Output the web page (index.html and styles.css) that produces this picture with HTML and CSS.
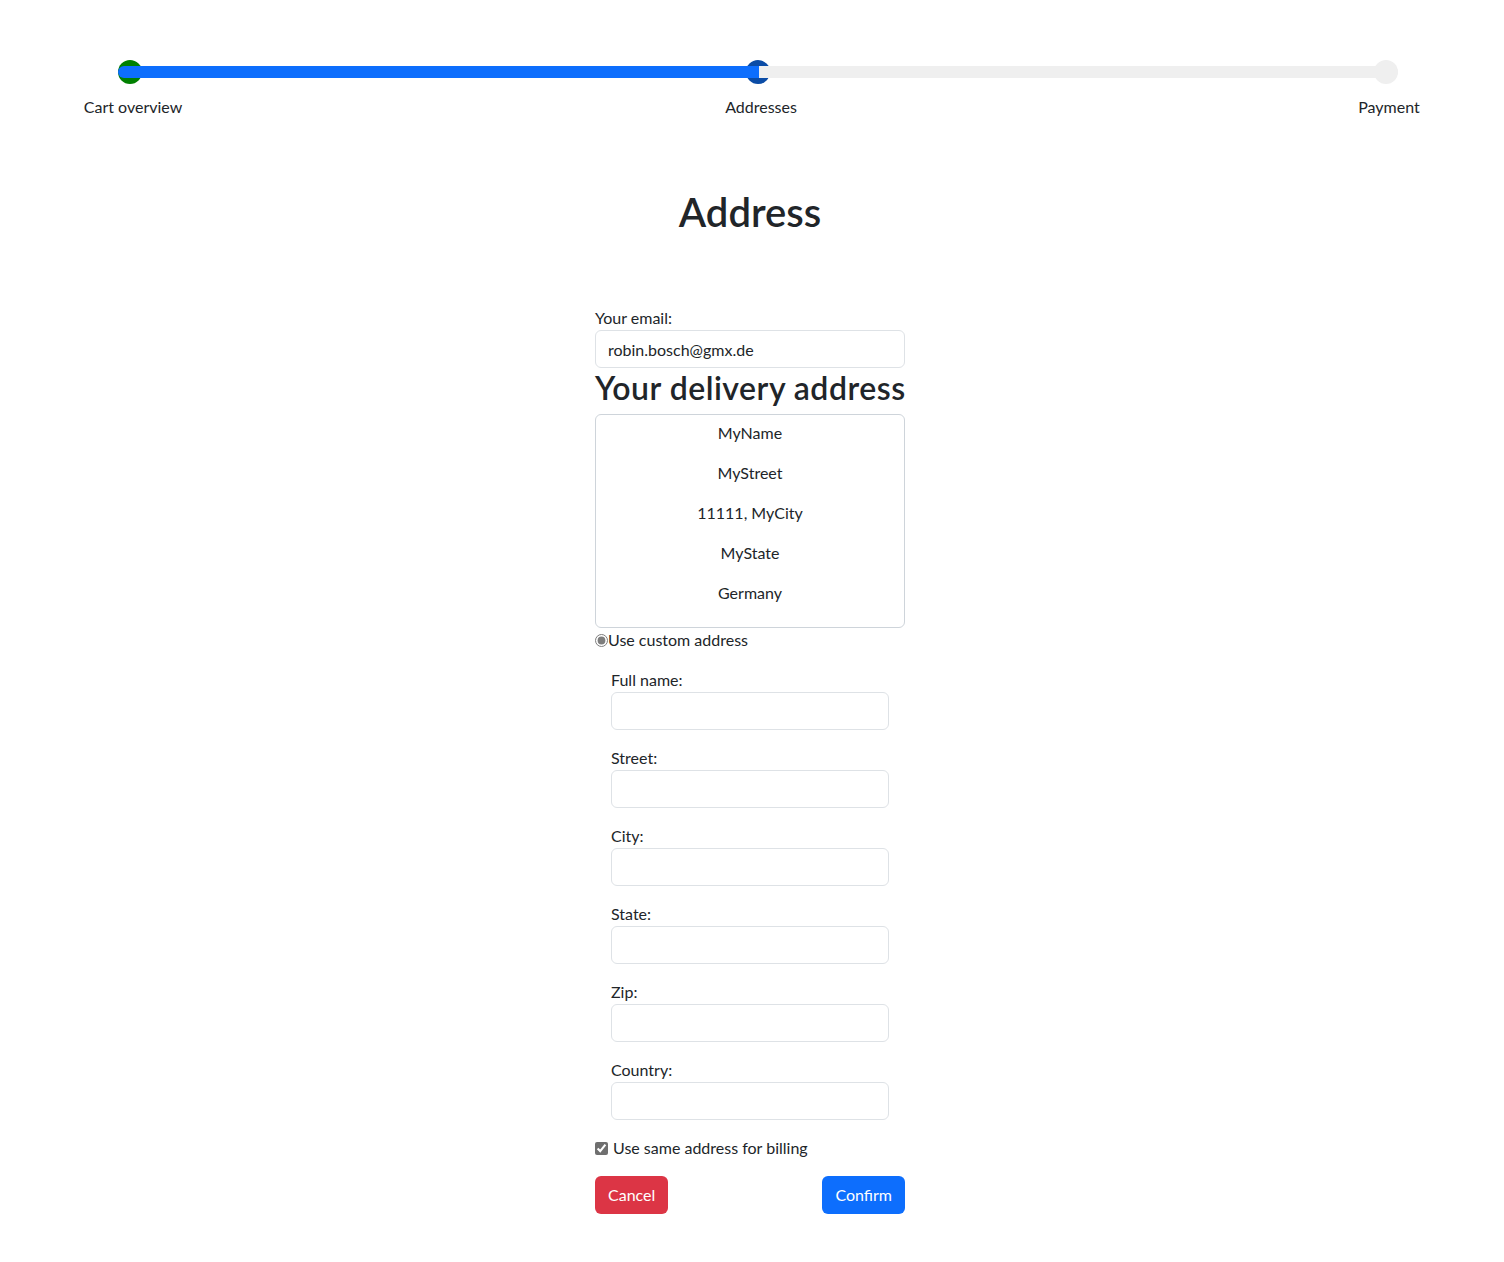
FILE: index.html
```html
<!DOCTYPE html>
<html lang="en">
<head>
<meta charset="utf-8">
<title>Address</title>
<link rel="stylesheet" href="styles.css">
</head>
<body>
<div class="progress-wrap">
  <div class="steps">
    <div class="bar bar-done"></div>
    <div class="bar bar-todo"></div>
    <div class="step">
      <span class="dot dot-done"></span>
      <span class="step-label">Cart overview</span>
    </div>
    <div class="step">
      <span class="dot dot-current"></span>
      <span class="step-label">Addresses</span>
    </div>
    <div class="step">
      <span class="dot dot-todo"></span>
      <span class="step-label">Payment</span>
    </div>
  </div>
</div>

<h1 class="title">Address</h1>

<form class="form">
  <label class="label" for="email">Your email:</label>
  <input class="input" id="email" type="text" value="robin.bosch@gmx.de">

  <h2 class="subtitle">Your delivery address</h2>
  <div class="address-box">
    <p>MyName</p>
    <p>MyStreet</p>
    <p>11111, MyCity</p>
    <p>MyState</p>
    <p>Germany</p>
  </div>

  <div class="radio-row">
    <input class="radio" type="radio" name="addr" checked>
    <span>Use custom address</span>
  </div>

  <div class="custom">
    <div class="group">
      <label class="label">Full name:</label>
      <input class="input" type="text">
    </div>
    <div class="group">
      <label class="label">Street:</label>
      <input class="input" type="text">
    </div>
    <div class="group">
      <label class="label">City:</label>
      <input class="input" type="text">
    </div>
    <div class="group">
      <label class="label">State:</label>
      <input class="input" type="text">
    </div>
    <div class="group">
      <label class="label">Zip:</label>
      <input class="input" type="text">
    </div>
    <div class="group">
      <label class="label">Country:</label>
      <input class="input" type="text">
    </div>
  </div>

  <div class="check-row">
    <input class="check" type="checkbox" checked>
    <span>Use same address for billing</span>
  </div>

  <div class="buttons">
    <button type="button" class="btn btn-danger">Cancel</button>
    <button type="button" class="btn btn-primary">Confirm</button>
  </div>
</form>
</body>
</html>
```

FILE: styles.css
```css
* { box-sizing: border-box; }

body {
  margin: 0;
  width: 1500px;
  font-family: "Lato", "Open Sans", sans-serif;
  font-size: 16px;
  line-height: 24px;
  color: #212529;
  background: #fff;
}

.progress-wrap {
  padding: 60px 0 0 118px;
}

.steps {
  position: relative;
  width: 1280px;
  display: flex;
  justify-content: space-between;
}

.bar {
  position: absolute;
  top: 6px;
  height: 12px;
  z-index: 2;
}

.bar-done {
  left: 0;
  width: 641px;
  background: #0d6efd;
  border-radius: 6px 0 0 6px;
}

.bar-todo {
  left: 641px;
  right: 0;
  background: #efefef;
  border-radius: 0 6px 6px 0;
}

.step {
  width: 24px;
  display: flex;
  flex-direction: column;
  align-items: center;
}

.dot {
  width: 24px;
  height: 24px;
  border-radius: 50%;
  display: block;
}

.dot-done { background: #008000; }
.dot-current { background: #0b4ca6; }
.dot-todo { background: #efefef; }

.step-label {
  margin-top: 11px;
  white-space: nowrap;
  position: relative;
  left: 3px;
}

.title {
  margin: 69px 0 0;
  text-align: center;
  font-size: 40px;
  line-height: 48px;
  font-weight: 600;
}

.form {
  width: 310px;
  margin: 70px auto 0;
}

.label {
  display: block;
}

.input {
  display: block;
  width: 100%;
  height: 38px;
  padding: 6px 12px;
  border: 1px solid #dee2e6;
  border-radius: 6px;
  font: inherit;
  color: #212529;
  background: #fff;
}

.subtitle {
  margin: 0 0 6px;
  font-size: 32px;
  line-height: 40px;
  font-weight: 600;
  letter-spacing: 0.5px;
  white-space: nowrap;
}

.address-box {
  border: 1px solid #ced4da;
  border-radius: 6px;
  padding: 6px 0 6px;
  text-align: center;
}

.address-box p {
  margin: 0 0 16px;
}

.radio-row,
.check-row {
  display: flex;
  align-items: center;
}

.radio {
  margin: 0;
  width: 13px;
  height: 13px;
  accent-color: #7d7d7d;
}

.check {
  margin: 0 5px 0 0;
  width: 13px;
  height: 13px;
  accent-color: #6f6f6f;
}

.custom {
  padding: 16px 16px 0;
}

.group {
  margin-bottom: 16px;
}

.buttons {
  margin-top: 16px;
  display: flex;
  justify-content: space-between;
}

.btn {
  height: 38px;
  padding: 6px 12px;
  border: 1px solid transparent;
  border-radius: 6px;
  font: inherit;
  color: #fff;
}

.btn-danger { background: #dc3545; }
.btn-primary { background: #0d6efd; }
```
